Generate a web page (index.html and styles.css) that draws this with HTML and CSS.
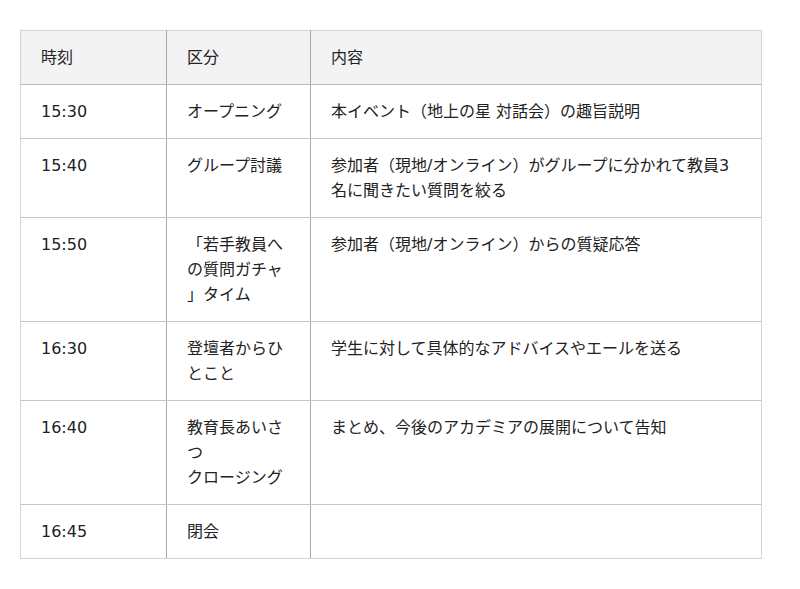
FILE: index.html
```html
<!DOCTYPE html>
<html lang="ja">
<head>
<meta charset="utf-8">
<link rel="stylesheet" href="styles.css">
</head>
<body>
<div class="wrap">
<table class="schedule">
  <colgroup>
    <col class="c-time">
    <col class="c-kind">
    <col class="c-desc">
  </colgroup>
  <thead>
    <tr><th>時刻</th><th>区分</th><th>内容</th></tr>
  </thead>
  <tbody>
    <tr><td>15:30</td><td class="kind">オープニング</td><td>本イベント（地上の星 対話会）の趣旨説明</td></tr>
    <tr><td>15:40</td><td class="kind">グループ討議</td><td>参加者（現地/オンライン）がグループに分かれて教員3名に聞きたい質問を絞る</td></tr>
    <tr><td>15:50</td><td class="kind">「若手教員への質問ガチャ」タイム</td><td>参加者（現地/オンライン）からの質疑応答</td></tr>
    <tr><td>16:30</td><td class="kind">登壇者からひとこと</td><td>学生に対して具体的なアドバイスやエールを送る</td></tr>
    <tr><td>16:40</td><td class="kind">教育長あいさつ<br>クロージング</td><td>まとめ、今後のアカデミアの展開について告知</td></tr>
    <tr><td>16:45</td><td class="kind">閉会</td><td></td></tr>
  </tbody>
</table>
</div>
</body>
</html>
```
FILE: styles.css
```css
html, body {
  margin: 0;
  padding: 0;
  background: #fff;
}
.wrap {
  padding: 30px 20px;
}
.schedule {
  width: 742px;
  border-collapse: collapse;
  table-layout: fixed;
  font-family: "DejaVu Sans", "Noto Sans CJK JP", sans-serif;
  font-size: 16px;
  line-height: 25px;
  color: #222;
  border: 1px solid #d4d4d4;
}
.c-time { width: 146px; }
.c-kind { width: 144px; }
.schedule th,
.schedule td {
  text-align: left;
  vertical-align: top;
  font-weight: normal;
  padding: 14px 20px;
  border-top: 1px solid #c8c8c8;
  border-bottom: 1px solid #c8c8c8;
  border-left: 1px solid #aaa;
  border-right: 1px solid #aaa;
}
.schedule th:first-child,
.schedule td:first-child { border-left-color: #d4d4d4; }
.schedule th:last-child,
.schedule td:last-child { border-right-color: #d4d4d4; }
.schedule thead th {
  background: #f3f3f3;
  border-top-color: #d4d4d4;
  border-bottom-color: #bbb;
}
.schedule tbody tr:last-child td { border-bottom-color: #d4d4d4; }
.kind {
  line-break: anywhere;
}
```
